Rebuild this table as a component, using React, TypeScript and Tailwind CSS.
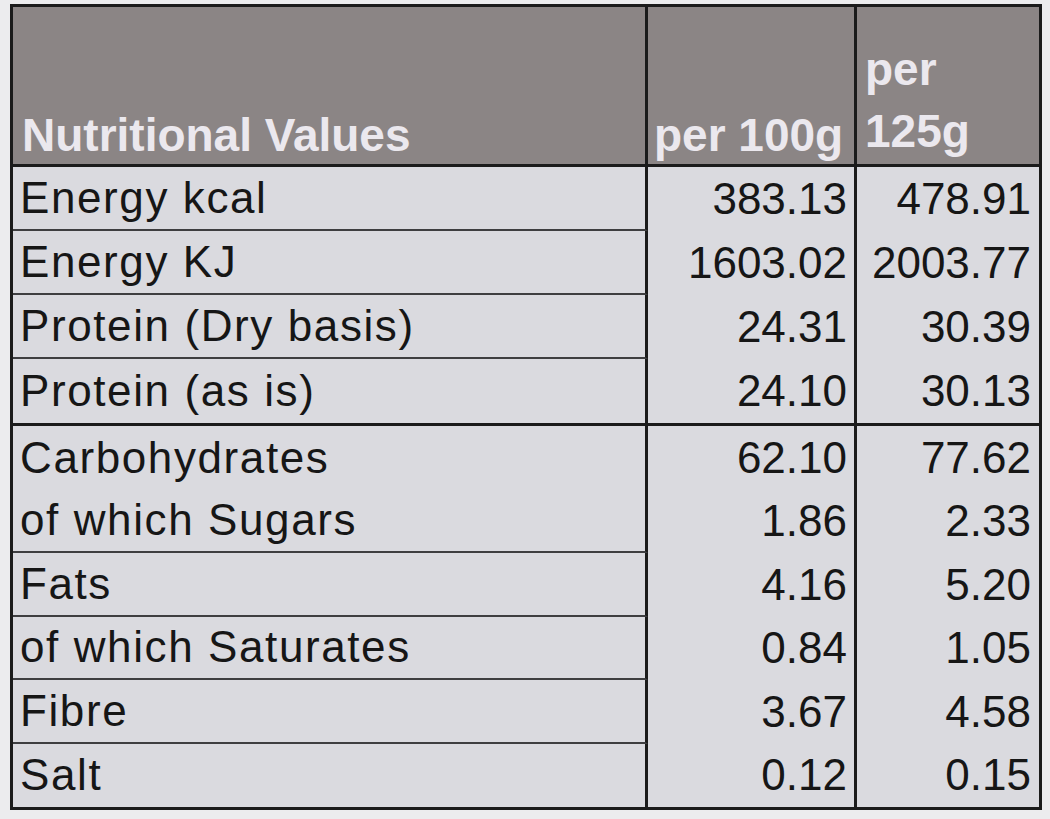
const font = { fontFamily: '"Liberation Sans", Arial, sans-serif' };

type Row = { label: string; a: string; b: string; line: boolean };

const groupOne: Row[] = [
  { label: "Energy kcal", a: "383.13", b: "478.91", line: true },
  { label: "Energy KJ", a: "1603.02", b: "2003.77", line: true },
  { label: "Protein (Dry basis)", a: "24.31", b: "30.39", line: true },
  { label: "Protein (as is)", a: "24.10", b: "30.13", line: false },
];

const groupTwo: Row[] = [
  { label: "Carbohydrates", a: "62.10", b: "77.62", line: false },
  { label: "of which Sugars", a: "1.86", b: "2.33", line: true },
  { label: "Fats", a: "4.16", b: "5.20", line: true },
  { label: "of which Saturates", a: "0.84", b: "1.05", line: true },
  { label: "Fibre", a: "3.67", b: "4.58", line: true },
  { label: "Salt", a: "0.12", b: "0.15", line: false },
];

function TableRow({ row, h }: { row: Row; h: string }) {
  return (
    <div className={`flex ${h}`}>
      <div
        className={`w-[635px] shrink-0 flex items-center pl-[7px] border-r-[3px] border-[#1b1b1b] ${
          row.line ? "border-b-2 border-b-[#3e3e40]" : ""
        }`}
      >
        <span className="text-[44px] tracking-[1.6px] text-[#161616] leading-none">
          {row.label}
        </span>
      </div>
      <div className="w-[209px] shrink-0 flex items-center justify-end pr-[7px] border-r-[3px] border-[#1b1b1b]">
        <span className="text-[44px] text-[#161616] leading-none">{row.a}</span>
      </div>
      <div className="flex-1 flex items-center justify-end pr-[8px]">
        <span className="text-[44px] text-[#161616] leading-none">{row.b}</span>
      </div>
    </div>
  );
}

export default function App() {
  return (
    <div className="w-[1050px] h-[819px] bg-[#ececee] overflow-hidden" style={font}>
      <div className="ml-[10px] mt-[4px] w-[1032px] border-[3px] border-[#1b1b1b] bg-[#dadadf]">
        {/* header */}
        <div className="flex h-[160px] bg-[#8b8585] border-b-[3px] border-[#1b1b1b]">
          <div className="w-[635px] shrink-0 flex items-end pl-[9px] pb-[6px] border-r-[3px] border-[#1b1b1b]">
            <span className="text-[46px] font-bold text-[#ebe8ee] leading-none">
              Nutritional Values
            </span>
          </div>
          <div className="w-[209px] shrink-0 flex items-end pl-[6px] pb-[6px] border-r-[3px] border-[#1b1b1b]">
            <span className="text-[46px] font-bold text-[#ebe8ee] leading-none">per 100g</span>
          </div>
          <div className="flex-1 flex items-end pl-[8px] pb-[2px]">
            <span className="text-[46px] font-bold text-[#ebe8ee] leading-[62px]">
              per
              <br />
              125g
            </span>
          </div>
        </div>
        {/* first group */}
        <div className="border-b-[3px] border-[#1b1b1b]">
          {groupOne.map((r) => (
            <TableRow key={r.label} row={r} h="h-[64px]" />
          ))}
        </div>
        {/* second group */}
        <div>
          {groupTwo.map((r) => (
            <TableRow key={r.label} row={r} h="h-[63.5px]" />
          ))}
        </div>
      </div>
    </div>
  );
}
